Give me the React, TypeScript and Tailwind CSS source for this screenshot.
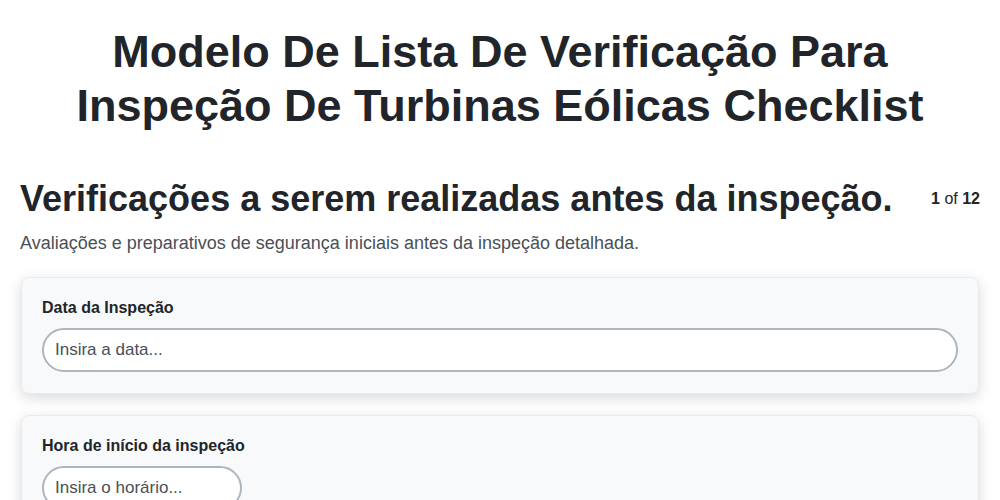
import React from "react";

export default function App() {
  return (
    <div className="min-h-screen bg-white px-5 text-[#212529]" style={{ fontFamily: '"Liberation Sans", Arial, sans-serif' }}>
      <h1 className="pt-[25px] text-center text-[45px] font-bold leading-[54px]">
        Modelo De Lista De Verificação Para
        <br />
        Inspeção De Turbinas Eólicas Checklist
      </h1>
      <div className="mt-[44px] flex items-center justify-between">
        <h2 className="text-[36px] font-bold leading-[43px]">Verificações a serem realizadas antes da inspeção.</h2>
        <div className="text-[16px]">
          <span className="font-bold">1</span> of <span className="font-bold">12</span>
        </div>
      </div>
      <p className="mt-[10px] text-[18px] leading-[27px] text-[#495057]">
        Avaliações e preparativos de segurança iniciais antes da inspeção detalhada.
      </p>
      <div className="mx-px mt-[20px] flex flex-col gap-[21px]">
        <div className="rounded-lg border border-[#e9ecef] bg-[#f8f9fa] px-5 pb-[21px] pt-[18px] shadow-[0_4px_14px_rgba(0,0,0,0.15)]">
          <label className="mb-2 block text-[16px] font-bold leading-6">Data da Inspeção</label>
          <input
            className="h-[44px] w-full rounded-full border-2 border-[#adb5bd] bg-white px-[11px] text-[17px] text-[#212529] outline-none placeholder:text-[#495057]"
            placeholder="Insira a data..."
          />
        </div>
        <div className="rounded-lg border border-[#e9ecef] bg-[#f8f9fa] px-5 pb-[21px] pt-[18px] shadow-[0_4px_14px_rgba(0,0,0,0.15)]">
          <label className="mb-2 block text-[16px] font-bold leading-6">Hora de início da inspeção</label>
          <input
            className="h-[44px] w-[200px] rounded-full border-2 border-[#adb5bd] bg-white px-[11px] text-[17px] text-[#212529] outline-none placeholder:text-[#495057]"
            placeholder="Insira o horário..."
          />
        </div>
      </div>
    </div>
  );
}
